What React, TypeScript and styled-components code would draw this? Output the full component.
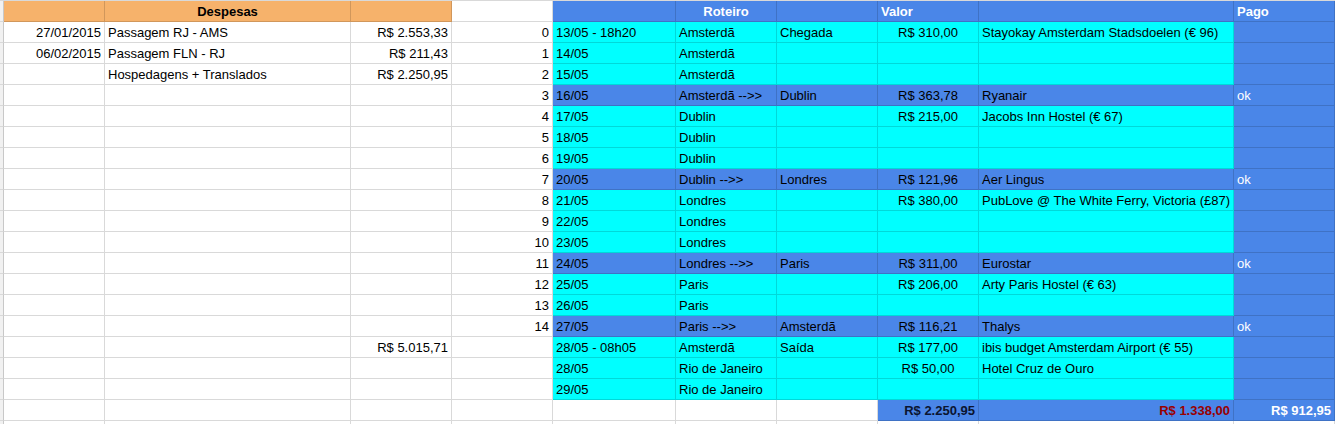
import React from 'react';
import styled, { createGlobalStyle } from 'styled-components';

const ORANGE = '#f6b26b';
const BLUE = '#4a86e8';
const CYAN = '#00ffff';

type Align = 'left' | 'center' | 'right';

type Trip = {
  date: string;
  city: string;
  extra?: string;
  value?: string;
  note?: string;
  paid?: string;
  hop?: boolean;
};

type Line = {
  date?: string;
  item?: string;
  cost?: string;
  n?: string;
  trip?: Trip;
};

const lines: Line[] = [
  {
    date: '27/01/2015',
    item: 'Passagem RJ - AMS',
    cost: 'R$ 2.553,33',
    n: '0',
    trip: { date: '13/05 - 18h20', city: 'Amsterdã', extra: 'Chegada', value: 'R$ 310,00', note: 'Stayokay Amsterdam Stadsdoelen (€ 96)' },
  },
  { date: '06/02/2015', item: 'Passagem FLN - RJ', cost: 'R$ 211,43', n: '1', trip: { date: '14/05', city: 'Amsterdã' } },
  { item: 'Hospedagens + Translados', cost: 'R$ 2.250,95', n: '2', trip: { date: '15/05', city: 'Amsterdã' } },
  {
    n: '3',
    trip: { date: '16/05', city: 'Amsterdã -->>', extra: 'Dublin', value: 'R$ 363,78', note: 'Ryanair', paid: 'ok', hop: true },
  },
  { n: '4', trip: { date: '17/05', city: 'Dublin', value: 'R$ 215,00', note: 'Jacobs Inn Hostel (€ 67)' } },
  { n: '5', trip: { date: '18/05', city: 'Dublin' } },
  { n: '6', trip: { date: '19/05', city: 'Dublin' } },
  {
    n: '7',
    trip: { date: '20/05', city: 'Dublin -->>', extra: 'Londres', value: 'R$ 121,96', note: 'Aer Lingus', paid: 'ok', hop: true },
  },
  { n: '8', trip: { date: '21/05', city: 'Londres', value: 'R$ 380,00', note: 'PubLove @ The White Ferry, Victoria (£87)' } },
  { n: '9', trip: { date: '22/05', city: 'Londres' } },
  { n: '10', trip: { date: '23/05', city: 'Londres' } },
  {
    n: '11',
    trip: { date: '24/05', city: 'Londres -->>', extra: 'Paris', value: 'R$ 311,00', note: 'Eurostar', paid: 'ok', hop: true },
  },
  { n: '12', trip: { date: '25/05', city: 'Paris', value: 'R$ 206,00', note: 'Arty Paris Hostel (€ 63)' } },
  { n: '13', trip: { date: '26/05', city: 'Paris' } },
  {
    n: '14',
    trip: { date: '27/05', city: 'Paris -->>', extra: 'Amsterdã', value: 'R$ 116,21', note: 'Thalys', paid: 'ok', hop: true },
  },
  {
    cost: 'R$ 5.015,71',
    trip: { date: '28/05 - 08h05', city: 'Amsterdã', extra: 'Saída', value: 'R$ 177,00', note: 'ibis budget Amsterdam Airport (€ 55)' },
  },
  { trip: { date: '28/05', city: 'Rio de Janeiro', value: 'R$ 50,00', note: 'Hotel Cruz de Ouro' } },
  { trip: { date: '29/05', city: 'Rio de Janeiro' } },
];

function App(): React.ReactElement {
  return (
    <>
      <GlobalStyle />
      <Sheet>
        {/* header row */}
        <Edge />
        <Cell $bg={ORANGE} />
        <Cell $bg={ORANGE} $align="center" $bold>
          Despesas
        </Cell>
        <Cell $bg={ORANGE} />
        <Cell />
        <Cell $bg={BLUE} />
        <Cell $bg={BLUE} $align="center" $bold $color="#fff">
          Roteiro
        </Cell>
        <Cell $bg={BLUE} />
        <Cell $bg={BLUE} $bold $color="#fff">
          Valor
        </Cell>
        <Cell $bg={BLUE} />
        <Cell $bg={BLUE} $bold $color="#fff">
          Pago
        </Cell>

        {lines.map((line, i) => {
          const trip = line.trip;
          const bg = trip?.hop ? BLUE : CYAN;
          return (
            <React.Fragment key={i}>
              <Edge />
              <Cell $align="right">{line.date}</Cell>
              <Cell>{line.item}</Cell>
              <Cell $align="right">{line.cost}</Cell>
              <Cell $align="right">{line.n}</Cell>
              <Cell $bg={bg}>{trip?.date}</Cell>
              <Cell $bg={bg}>{trip?.city}</Cell>
              <Cell $bg={bg}>{trip?.extra}</Cell>
              <Cell $bg={bg} $align="center">
                {trip?.value}
              </Cell>
              <Cell $bg={bg}>{trip?.note}</Cell>
              <Cell $bg={BLUE} $color="#fff">
                {trip?.paid}
              </Cell>
            </React.Fragment>
          );
        })}

        {/* totals row */}
        <Edge />
        <Cell />
        <Cell />
        <Cell />
        <Cell />
        <Cell />
        <Cell />
        <Cell />
        <Cell $bg={BLUE} $align="right" $bold $color="#0b1530">
          R$ 2.250,95
        </Cell>
        <Cell $bg={BLUE} $align="right" $bold $color="#990000">
          R$ 1.338,00
        </Cell>
        <Cell $bg={BLUE} $align="right" $bold $color="#fff">
          R$ 912,95
        </Cell>

        {/* trailing empty row */}
        <Edge />
        {Array.from({ length: 10 }).map((_, i) => (
          <Cell key={i} />
        ))}
      </Sheet>
    </>
  );
}

export default App;

const GlobalStyle = createGlobalStyle`
  html, body {
    margin: 0;
    padding: 0;
    background: #fff;
    overflow: hidden;
  }
  body {
    font-family: 'Liberation Sans', Arial, sans-serif;
  }
`;

const Sheet = styled.div`
  display: grid;
  grid-template-columns: 4px 101px 246px 101px 101px 123px 101px 101px 101px 255px 101px;
  grid-auto-rows: 21px;
  width: 1335px;
  height: 424px;
  overflow: hidden;
  border-top: 1px solid #d9d9d9;
  font-size: 13px;
  color: #000;
`;

const Cell = styled.div<{ $bg?: string; $align?: Align; $bold?: boolean; $color?: string }>`
  box-sizing: border-box;
  display: flex;
  align-items: center;
  justify-content: ${(p) =>
    p.$align === 'right' ? 'flex-end' : p.$align === 'center' ? 'center' : 'flex-start'};
  padding: 1px 3px 0 3px;
  background: ${(p) => p.$bg || '#fff'};
  color: ${(p) => p.$color || '#000'};
  font-weight: ${(p) => (p.$bold ? 700 : 400)};
  border-right: 1px solid rgba(0, 0, 0, 0.15);
  border-bottom: 1px solid rgba(0, 0, 0, 0.15);
  white-space: nowrap;
  overflow: hidden;
  line-height: 19px;
`;

const Edge = styled.div`
  box-sizing: border-box;
  background: #f1f1f1;
  border-right: 1px solid #c8c8c8;
  border-bottom: 1px solid #d9d9d9;
`;
